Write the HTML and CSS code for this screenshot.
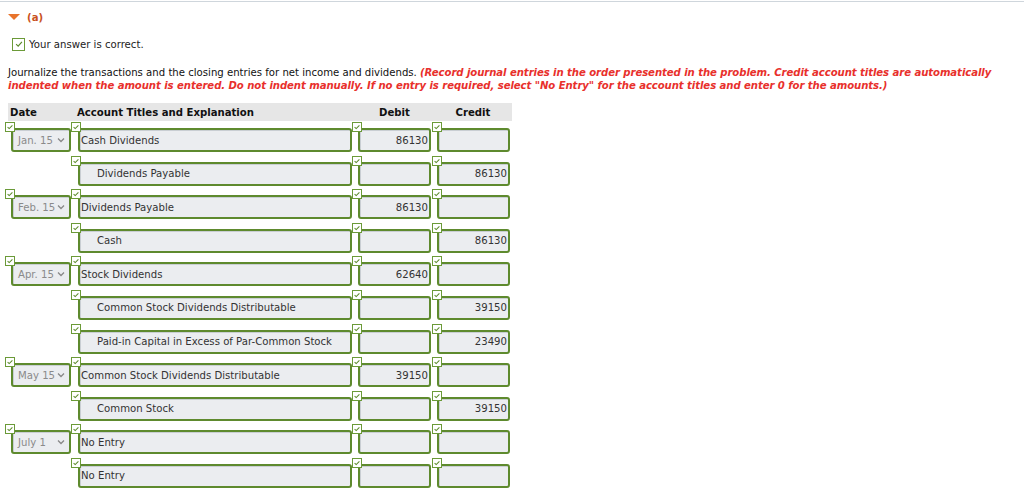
FILE: index.html
```html
<!DOCTYPE html>
<html>
<head>
<meta charset="utf-8">
<link rel="stylesheet" href="styles.css">
</head>
<body>
<div class="topline"></div>
<div class="part"><span class="tri"></span><span class="plabel">(a)</span></div>
<div class="correct"><span class="cbox big"><svg viewBox="0 0 12 12" width="10" height="10"><path d="M2.5 6.2 L5 8.5 L9.5 3.5" fill="none" stroke="#5b8a2a" stroke-width="1.4"/></svg></span><span>Your answer is correct.</span></div>
<p class="instr">Journalize the transactions and the closing entries for net income and dividends. <em>(Record journal entries in the order presented in the problem. Credit account titles are automatically indented when the amount is entered. Do not indent manually. If no entry is required, select "No Entry" for the account titles and enter 0 for the amounts.)</em></p>

<div class="journal">
  <div class="head">
    <div class="c-date">Date</div>
    <div class="c-acct">Account Titles and Explanation</div>
    <div class="c-deb">Debit</div>
    <div class="c-cred">Credit</div>
  </div>
  <div id="rows"></div>
</div>
<script src="app.js"></script>
</body>
</html>
```
FILE: styles.css
```css
* { box-sizing: border-box; }
html, body { margin: 0; padding: 0; background: #fff; }
body { font-family: "DejaVu Sans", Verdana, sans-serif; font-size: 10.15px; color: #222; padding: 0 8px; }
.topline { height: 1px; background: #cfd6dc; margin: 1px -8px 0; }
.part { display: flex; align-items: center; height: 18px; margin-top: 6px; }
.tri { width: 0; height: 0; border-left: 6px solid transparent; border-right: 6px solid transparent; border-top: 6px solid #e8742c; margin-right: 7px; }
.plabel { color: #c9521e; font-weight: bold; }
.correct { display: flex; align-items: center; margin-top: 11px; margin-left: 4px; height: 14px; }
.cbox { display: inline-flex; align-items: center; justify-content: center; background: #fff; border: 1px solid #6b9a38; }
.cbox.big { width: 13px; height: 13px; margin-right: 4px; border-width: 1.5px; }
.instr { margin: 15px 0 0; line-height: 13px; color: #111; }
.instr em { color: #e8302c; font-weight: bold; font-style: italic; letter-spacing: -0.08px; }
.journal { margin-top: 11px; width: 504px; }
.head { display: flex; background: #e6e6e6; height: 18px; align-items: center; font-weight: bold; color: #111; }
.c-date { width: 66px; padding-left: 2px; }
.c-acct { width: 281px; padding-left: 3px; }
.c-deb { width: 79px; text-align: center; }
.c-cred { width: 78px; text-align: center; }
.row { display: flex; height: 33.6px; padding-top: 7px; }
.cell { position: relative; }
.cell .chk { position: absolute; top: -6px; left: -3px; width: 10px; height: 10px; z-index: 2; }
.cell.cr .chk { left: -2px; }
.fld { height: 24px; border: 2px solid #5e8a2e; border-radius: 3px; background: #ebedf0; box-shadow: inset 1px 1px 0 #c9ced3; display: flex; align-items: center; color: #333; white-space: nowrap; }
.cell.dt { width: 66px; }
.cell.dt .fld { margin-left: 3px; width: 60px; color: #8a8a8a; padding-left: 5px; justify-content: space-between; padding-right: 4px; }
.cell.ac { width: 281px; }
.cell.ac .fld { margin-left: 4px; width: 274px; padding-left: 1px; }
.cell.ac .fld.ind { padding-left: 17px; }
.cell.db { width: 79px; }
.cell.db .fld, .cell.cr .fld { margin-left: 3px; width: 73px; justify-content: flex-end; padding-right: 1px; }
.cell.cr { width: 78px; }
.chev { width: 8px; height: 6px; }
```
FILE: app.js
```js
const rows = [
  ["Jan. 15","Cash Dividends",0,"86130",""],
  ["","Dividends Payable",1,"","86130"],
  ["Feb. 15","Dividends Payable",0,"86130",""],
  ["","Cash",1,"","86130"],
  ["Apr. 15","Stock Dividends",0,"62640",""],
  ["","Common Stock Dividends Distributable",1,"","39150"],
  ["","Paid-in Capital in Excess of Par-Common Stock",1,"","23490"],
  ["May 15","Common Stock Dividends Distributable",0,"39150",""],
  ["","Common Stock",1,"","39150"],
  ["July 1","No Entry",0,"",""],
  ["","No Entry",0,"",""]
];
const chk = '<span class="cbox chk"><svg viewBox="0 0 10 10" width="8" height="8"><path d="M2 5.2 L4 7 L8 3" fill="none" stroke="#5b8a2a" stroke-width="1.3"/></svg></span>';
const chev = '<svg class="chev" viewBox="0 0 8 6"><path d="M1 1.5 L4 4.5 L7 1.5" fill="none" stroke="#888" stroke-width="1.3"/></svg>';
const c = document.getElementById('rows');
let html = '';
for (const r of rows) {
  html += '<div class="row">';
  html += '<div class="cell dt">' + (r[0] ? chk + '<div class="fld"><span>' + r[0] + '</span>' + chev + '</div>' : '') + '</div>';
  html += '<div class="cell ac">' + chk + '<div class="fld' + (r[2] ? ' ind' : '') + '">' + r[1] + '</div></div>';
  html += '<div class="cell db">' + chk + '<div class="fld">' + r[3] + '</div></div>';
  html += '<div class="cell cr">' + chk + '<div class="fld">' + r[4] + '</div></div>';
  html += '</div>';
}
c.innerHTML = html;
```
